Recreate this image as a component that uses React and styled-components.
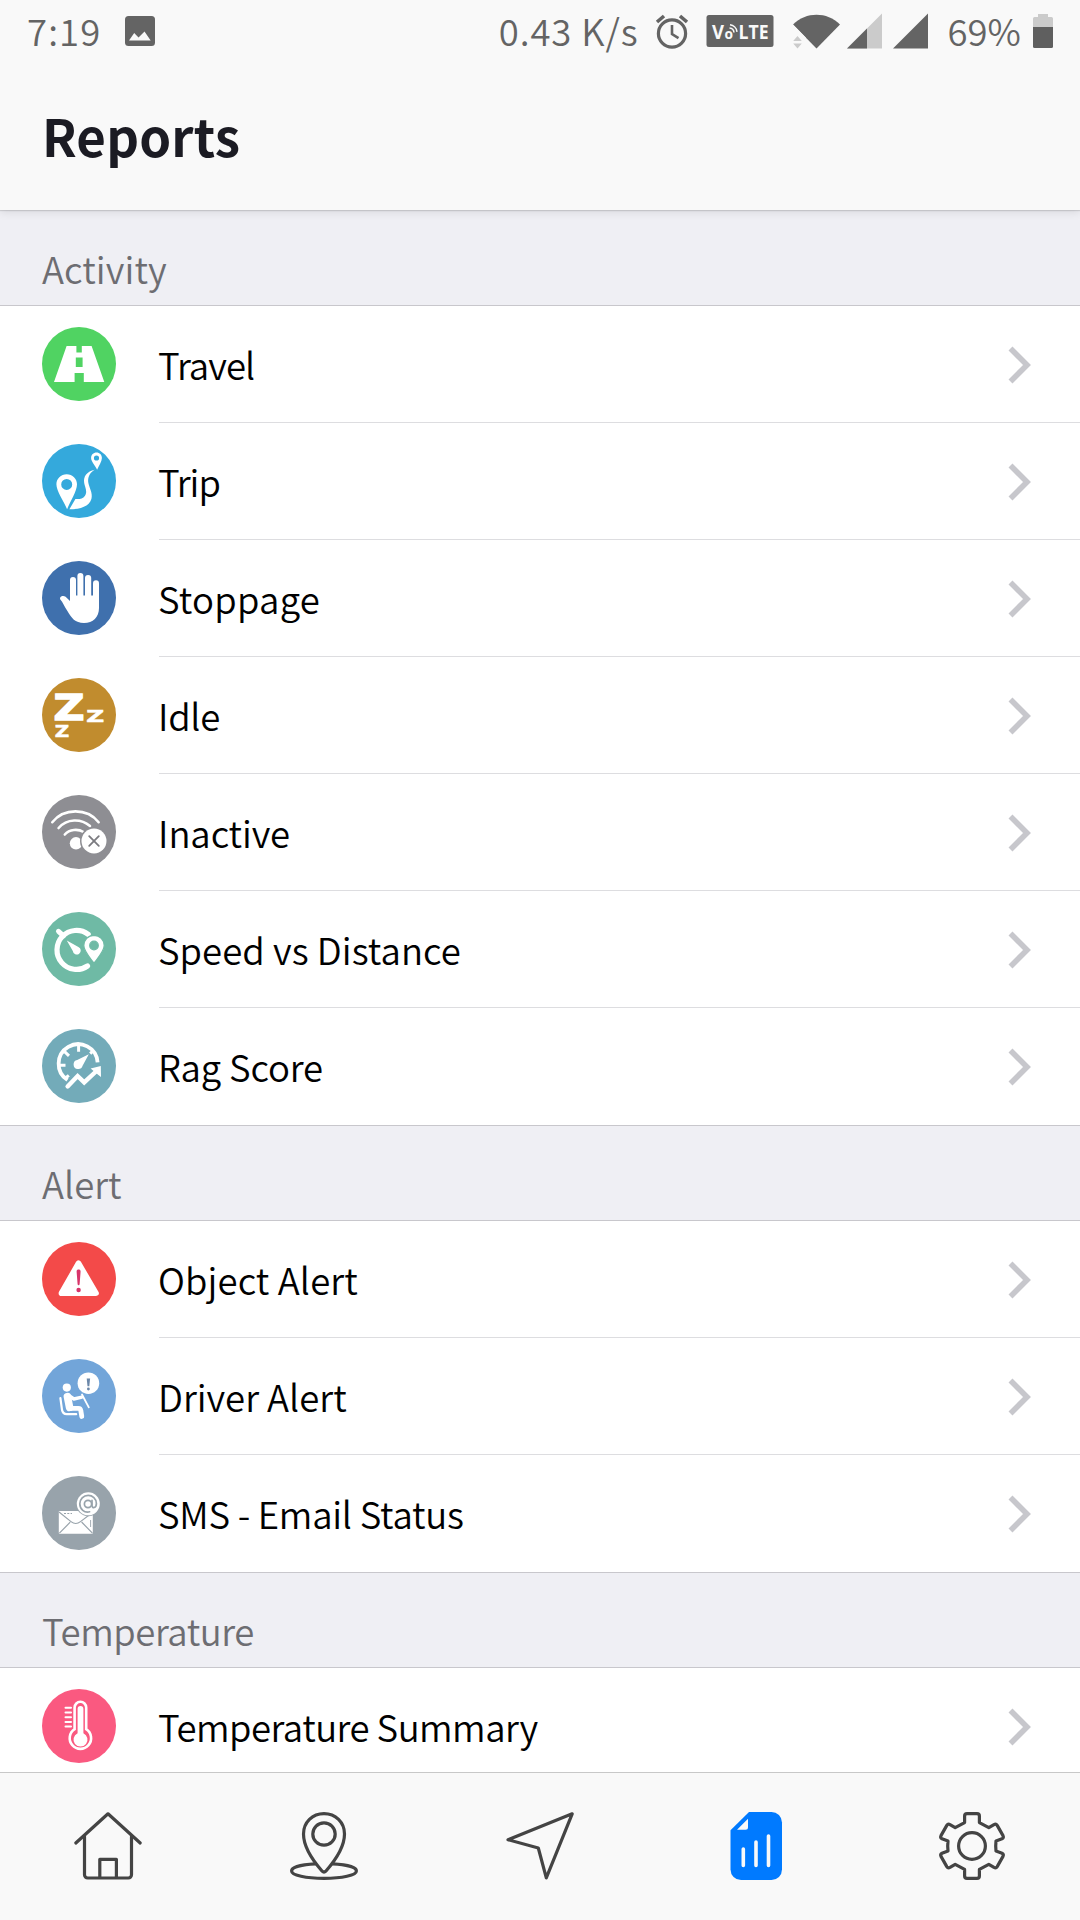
import React, { useState } from 'react';
import styled, { createGlobalStyle } from 'styled-components';

const GlobalStyle = createGlobalStyle`
  * {
    box-sizing: border-box;
  }

  body {
    margin: 0;
    overflow: hidden;
    background: #fff;
    font-family: 'Noto Sans CJK SC', 'Noto Sans', sans-serif;
    font-weight: 350;
  }
`;

/* Row icons, all drawn on a 74x74 grid */

const TravelIcon = () => (
  <path
    fill="#fff"
    fillRule="evenodd"
    d="M24.6 19h25L62.3 55H12L24.6 19Zm9.8 0v6.5h5.4V19h-5.4Zm-.6 11.5V40h6.8v-9.5h-6.8ZM32.6 46v9h9.2v-9h-9.2Z"
  />
);

const TripIcon = () => (
  <g fill="#fff">
    <path
      fillRule="evenodd"
      d="M24.7 30.3c-5.8 0-10.3 4.4-10.3 10 0 7 7.6 17.5 10.7 24.9 3-7.4 9.9-17.9 9.9-24.9 0-5.6-4.5-10-10.3-10Zm0 4.6a5.5 5.5 0 1 1 0 11 5.5 5.5 0 0 1 0-11Z"
    />
    <path
      fillRule="evenodd"
      d="M54.5 8.6c-3.1 0-5.4 2.4-5.4 5.4 0 3.7 4.3 7.7 6 11.8 1.7-4.1 4.8-8.1 4.8-11.8 0-3-2.3-5.4-5.4-5.4Zm0 2.8a2.6 2.6 0 1 1 0 5.2 2.6 2.6 0 0 1 0-5.2Z"
    />
    <path d="M52.8 25.8C45 27.5 41 32.5 42.2 39c.9 4.5 3.5 8.8.8 12.8-2.3 3.4-6 3.4-9.6 3.2l-6 10.2c10.4.2 19.8-2.7 22-10.2 1.7-6.2-2.5-11.5-3.2-17-.5-5.5 2-9.5 6.6-12.2Z" />
  </g>
);

const StoppageIcon = () => (
  <g fill="#fff">
    <path d="M28 40l-4.4-4.2c-2.6-2-6.6 0-5.3 2.6C21 41 22 45 25.4 50 29.5 57 33 62 42 62s15-6 15-15V34.5H28V40Z" />
    <rect x="28" y="16" width="6" height="26" rx="3" />
    <rect x="35.4" y="12" width="6" height="30" rx="3" />
    <rect x="43" y="14" width="6.2" height="28" rx="3" />
    <rect x="51" y="19.2" width="6" height="24" rx="3" />
  </g>
);

const IdleIcon = () => (
  <g fill="#fff" stroke="#fff" fontFamily="'DejaVu Sans', sans-serif" fontWeight="700">
    <text x="11.5" y="41.5" fontSize="36" strokeWidth="1.4" textLength="31" lengthAdjust="spacingAndGlyphs">Z</text>
    <text x="44.2" y="43.5" fontSize="15.5" strokeWidth=".5" textLength="18" lengthAdjust="spacingAndGlyphs">Z</text>
    <text x="12.8" y="59" fontSize="15" strokeWidth=".5" textLength="14.5" lengthAdjust="spacingAndGlyphs">Z</text>
  </g>
);

const InactiveIcon = () => (
  <>
    <g fill="none" stroke="#fff" strokeWidth="2.6" strokeLinecap="round">
      <path d="M10.3 27.2C22 12.8 45 12.8 56.6 27.2" />
      <path d="M16.6 33C25 23.4 39 23.4 48 31" />
      <path d="M22.8 39.5C27.5 34.2 36 33.6 41.5 37" />
    </g>
    <circle cx="34" cy="48.3" r="6.2" fill="#fff" />
    <circle cx="52" cy="46" r="14" fill="#8e8e93" />
    <circle cx="52" cy="46" r="12.5" fill="#fff" />
    <path d="M47.2 41.2l9.6 9.6M56.8 41.2l-9.6 9.6" stroke="#7b7b80" strokeWidth="1.8" strokeLinecap="round" />
  </>
);

const SpeedIcon = () => (
  <>
    <path d="M46.2 22.3A19.5 19.5 0 1 0 45.5 54" fill="none" stroke="#fff" strokeWidth="5.2" strokeLinecap="round" />
    <path d="M16.5 19.3l5 4.6" stroke="#fff" strokeWidth="5" strokeLinecap="round" />
    <path d="M24.8 28.6l11.6 6.3a4 4 0 1 1-5.6 4.2Z" fill="#fff" />
    <path
      fill="#fff"
      stroke="#6fbaa5"
      strokeWidth="1.2"
      fillRule="evenodd"
      d="M52 23.4c-5.8 0-10.2 4.6-10.2 10.2 0 5.4 5.2 11 10.2 17.6 5-6.6 10.2-12.2 10.2-17.6 0-5.6-4.4-10.2-10.2-10.2Zm0 5.8a4.3 4.3 0 1 1 0 8.6 4.3 4.3 0 0 1 0-8.6Z"
    />
  </>
);

const RagIcon = () => (
  <>
    <g fill="none" stroke="#fff" strokeWidth="3.8">
      <path d="M25.5 51A19.5 19.5 0 1 1 55.6 33.4" />
      <path d="M36.6 17v5.8M22.6 22.6l4.4 4.2M17.5 36.2h6M50.2 22.6l-2 2M23 49.5l3.8-3.2" strokeWidth="3" />
      <path d="M25.6 57.5L35.6 47l6.6 6.4L54.5 42" strokeWidth="4.4" strokeLinecap="round" strokeLinejoin="miter" />
    </g>
    <path d="M46.8 25.2l-6.2 11.6a4.6 4.6 0 1 1-5.4-5.8Z" fill="#fff" />
    <path d="M48.6 39.6l10.2-2.6.2 11-3.2-2.6Z" fill="#fff" />
  </>
);

const ObjectAlertIcon = () => (
  <>
    <path d="M36.5 21.2L54 51.2H19.4Z" fill="#fff" stroke="#fff" strokeWidth="5.6" strokeLinejoin="round" />
    <path d="M34.6 29.6c0-1.4.9-2 2-2s2 .6 2 2l-1 12.6c-.1 1.3-1.9 1.3-2 0Z" fill="#d8346a" />
    <circle cx="36.6" cy="48" r="2.2" fill="#d8346a" />
  </>
);

const DriverAlertIcon = () => (
  <>
    <circle cx="46.4" cy="24.2" r="10.8" fill="#fff" />
    <path d="M44.7 19.4h3.4l-.8 7.8h-1.8Z" fill="#6b87a8" />
    <circle cx="46.4" cy="30" r="1.4" fill="#6b87a8" />
    <circle cx="24.8" cy="28.6" r="4.1" fill="#fff" />
    <g fill="none" stroke="#fff" strokeLinecap="round" strokeLinejoin="round">
      <path d="M18.4 39.2l1.6 11.6c.5 3 2 4.4 4.8 4.4h9.4" strokeWidth="2.2" />
      <path d="M25.4 37.6l2.2 10.8" strokeWidth="7.6" />
      <path d="M28.2 49.3h8.2c1.6 0 2.2.8 2.4 2.2l1 6" strokeWidth="4.8" />
      <path d="M27.5 37l4.4 3 8-1.8" strokeWidth="3.4" />
      <path d="M40 35.5l6.8 12.8" strokeWidth="1.8" />
    </g>
  </>
);

const SmsEmailIcon = () => (
  <>
    <rect x="16.8" y="35" width="34" height="22.8" rx=".8" fill="#fff" />
    <g fill="none" stroke="#98a3ab" strokeWidth="1.2">
      <path d="M17 36l12 9.6c3 2.4 6.5 2.4 9.5 0l8-6" />
      <path d="M17.4 57.2l10.8-11M50.4 57.2L39.6 46" />
      <path d="M22 37.5h8" strokeDasharray="2 1.3" />
      <path d="M48.6 44v7" strokeWidth=".9" />
    </g>
    <circle cx="46.3" cy="27.8" r="12.4" fill="#98a3ab" />
    <circle cx="46.3" cy="27.8" r="11.5" fill="#fff" />
    <g fill="none" stroke="#98a3ab" strokeWidth="1.7" strokeLinecap="round">
      <circle cx="46" cy="28" r="3.6" />
      <path d="M50 24.4v5.2c0 3.2 4.4 2.6 4.4-2 0-5-4-8.2-8.2-8.2-4.8 0-8.4 3.8-8.4 8.4 0 5.4 4.6 9.4 9.8 8" />
    </g>
  </>
);

const TemperatureIcon = () => (
  <>
    <path
      d="M32.6 40.2V18.6a5.8 5.8 0 0 1 11.6 0v21.6a10.7 10.7 0 1 1-11.6 0Z"
      fill="none"
      stroke="#fff"
      strokeWidth="2.6"
    />
    <path d="M35.6 20a2.9 2.9 0 0 1 5.8 0v24.2a7 7 0 1 1-5.8 0Z" fill="#fff" />
    <path
      d="M23.5 18.8H29M23.5 23.5H29M23.5 28.2H29M23.5 32.9H29M23.5 37.6H29"
      stroke="#fff"
      strokeWidth="2"
      strokeLinecap="round"
    />
  </>
);

/* Tab icons, drawn on a 68x68 grid */

const HomeTab = () => (
  <>
    <path d="M1.8 31L34 1.8 66.2 31" />
    <path d="M10.5 24.5V62.8a3.2 3.2 0 0 0 3.2 3.2h40.6a3.2 3.2 0 0 0 3.2-3.2V24.5" />
    <path d="M25.8 65.5V47.3h16.6v18.2" />
  </>
);

const PlaceTab = () => (
  <>
    <path d="M34 1.6C22.5 1.6 13.5 10.5 13.5 22c0 12.5 9.3 26.5 18.7 37.2 1.2 1.3 2.4 1.3 3.6 0C45.2 48.5 54.5 34.5 54.5 22 54.5 10.5 45.5 1.6 34 1.6Z" />
    <circle cx="34" cy="22" r="11.2" />
    <path d="M25.5 51.9C12 52.5 1.6 55 1.6 58.9c0 4.3 14.4 7.4 32.4 7.4s32.4-3.1 32.4-7.4c0-3.9-10.4-6.4-23.9-7" />
  </>
);

const NavigateTab = () => <path d="M2 27.7L66.2 1.8 40.3 65.8 32.3 36Z" />;

const ReportsTab = () => (
  <>
    <path
      d="M27 0h22.5A10.5 10.5 0 0 1 60 10.5v47A10.5 10.5 0 0 1 49.5 68H19A10.5 10.5 0 0 1 8.5 57.5V18.3Z"
      fill="#007aff"
      stroke="none"
    />
    <path d="M26 6.8v8.4a2.5 2.5 0 0 1-2.5 2.5H15Z" fill="#f9f9f9" stroke="none" />
    <path d="M21.3 37v16.5M34 30v23.5M46.5 24v29.5" stroke="#f9f9f9" strokeWidth="3.6" />
  </>
);

const SettingsTab = () => (
  <>
    <path d="M26.6 10.6V4q0-2.4 2.4-2.4h10q2.4 0 2.4 2.4v6.6l9.4 5.1 5.2-3.1q2-1.1 3.2.8L65 23.6q1 2.2-1 3.2L58 29q-.6 5 0 10l6 2.2q2 1 1 3.2l-5.8 10.2q-1.2 1.9-3.2.8l-5.2-3.1-9.4 5.1V64q0 2.4-2.4 2.4H29q-2.4 0-2.4-2.4v-6.6l-9.4-5.1-5.2 3.1q-2 1.1-3.2-.8L3 44.4q-1-2.2 1-3.2l6-2.2q-.6-5 0-10l-6-2.2q-2-1-1-3.2l5.8-10.2q1.2-1.9 3.2-.8l5.2 3.1Z" />
    <circle cx="34" cy="34" r="13.4" />
  </>
);

const sections = [
  {
    title: 'Activity',
    spacing: 0.1,
    items: [
      { label: 'Travel', spacing: -0.9, color: '#50d362', Icon: TravelIcon },
      { label: 'Trip', spacing: -1, color: '#34a9dc', Icon: TripIcon },
      { label: 'Stoppage', spacing: 0.25, color: '#3f70ad', Icon: StoppageIcon },
      { label: 'Idle', spacing: -0.3, color: '#c18c2e', Icon: IdleIcon },
      { label: 'Inactive', spacing: -0.1, color: '#8e8e93', Icon: InactiveIcon },
      { label: 'Speed vs Distance', spacing: 0.05, color: '#6fbaa5', Icon: SpeedIcon },
      { label: 'Rag Score', spacing: -0.15, color: '#73abb9', Icon: RagIcon }
    ]
  },
  {
    title: 'Alert',
    spacing: 0,
    items: [
      { label: 'Object Alert', spacing: 0.12, color: '#f34a49', Icon: ObjectAlertIcon },
      { label: 'Driver Alert', spacing: 0, color: '#72a5d9', Icon: DriverAlertIcon },
      { label: 'SMS - Email Status', spacing: -0.25, color: '#98a3ab', Icon: SmsEmailIcon }
    ]
  },
  {
    title: 'Temperature',
    spacing: -0.45,
    items: [{ label: 'Temperature Summary', spacing: -0.53, color: '#fa5980', Icon: TemperatureIcon }]
  }
];

const tabs = [
  { id: 'home', Icon: HomeTab },
  { id: 'places', Icon: PlaceTab },
  { id: 'navigate', Icon: NavigateTab },
  { id: 'reports', Icon: ReportsTab },
  { id: 'settings', Icon: SettingsTab }
];

const StatusIcons = () => (
  <>
    <StatusIcon $gap={16} width="34" height="36" viewBox="0 0 34 36">
      <g fill="none" stroke="#646464" strokeWidth="3.2">
        <circle cx="17" cy="20.5" r="13.6" />
        <path d="M17 12v9l6.5 4.2" strokeWidth="2.6" />
        <path d="M2 9l7-6M32 9l-7-6" strokeWidth="3.6" />
      </g>
    </StatusIcon>
    <StatusIcon $gap={17} width="68" height="34" viewBox="0 0 68 34">
      <rect x=".5" y="1" width="67" height="32" rx="2.5" fill="#646464" />
      <g fill="#f9f9f9" fontFamily="'Open Sans', sans-serif" fontWeight="700">
        <text x="6" y="24.5" fontSize="19.5" textLength="12" lengthAdjust="spacingAndGlyphs">V</text>
        <text x="18.5" y="24.5" fontSize="14.5" textLength="8.5" lengthAdjust="spacingAndGlyphs">o</text>
        <text x="32.5" y="24.5" fontSize="19.5" textLength="30" lengthAdjust="spacingAndGlyphs">LTE</text>
      </g>
      <path d="M23.500 14a5 5 0 0 1 4.500 4.500M24 10.800a8 8 0 0 1 7 7" fill="none" stroke="#f9f9f9" strokeWidth="1.5" />
    </StatusIcon>
    <StatusIcon $gap={19} width="47" height="36" viewBox="0 0 47 36">
      <path d="M0 11.5C13-1.5 34-1.5 47 11.5L23.5 35.5Z" fill="#646464" />
      <path d="M0 11.5V36h12.5V24.2Z" fill="#f9f9f9" />
      <path d="M4.5 23l4.3 5H.2ZM4.5 35.5l4.3-5H.2Z" fill="#cbcbcb" />
    </StatusIcon>
    <StatusIcon $gap={7} width="35" height="36" viewBox="0 0 35 36">
      <path d="M35 .5V35.5H0Z" fill="#cbcbcb" />
      <path d="M20 15.5v20H0Z" fill="#646464" />
    </StatusIcon>
    <StatusIcon $gap={11} width="35" height="36" viewBox="0 0 35 36">
      <path d="M35 .5V35.5H0Z" fill="#646464" />
    </StatusIcon>
  </>
);

const App = () => {
  const [activeTab, setActiveTab] = useState('reports');

  return (
    <Screen>
      <GlobalStyle />
      <Header>
        <StatusBar>
          <StatusText $spacing={1.1}>7:19</StatusText>
          <StatusIcon $gap={24} width="30" height="30" viewBox="0 0 30 30">
            <rect width="30" height="30" rx="3.5" fill="#646464" />
            <path d="M4 24.5l5.2-7.5 4.3 4.6 6-6.2 6.2 9.1Z" fill="#f9f9f9" />
          </StatusIcon>
          <StatusRight>
            <StatusText $spacing={0.9}>0.43 K/s</StatusText>
            <StatusIcons />
            <StatusText $spacing={0} $gap={20}>69%</StatusText>
            <StatusIcon $gap={12} width="20" height="34" viewBox="0 0 20 34">
              <path d="M1.5 3H5V0h10v3h3.5Q20 3 20 4.5V13H0V4.5Q0 3 1.5 3Z" fill="#cbcbcb" />
              <path d="M0 13h20v19.5q0 1.5-1.5 1.5h-17Q0 34 0 32.5Z" fill="#5f5f5f" />
            </StatusIcon>
          </StatusRight>
        </StatusBar>
        <Title>Reports</Title>
      </Header>

      <Content>
        {sections.map(section => (
          <section key={section.title}>
            <SectionTitle $spacing={section.spacing}>{section.title}</SectionTitle>
            <List>
              {section.items.map(({ label, spacing, color, Icon }) => (
                <Row key={label}>
                  <RowIcon viewBox="0 0 74 74">
                    <circle cx="37" cy="37" r="37" fill={color} />
                    <Icon />
                  </RowIcon>
                  <RowBody>
                    <RowLabel $spacing={spacing}>{label}</RowLabel>
                    <Chevron viewBox="0 0 24 38">
                      <path d="M2.5 2.5L19 19 2.5 35.5" />
                    </Chevron>
                  </RowBody>
                </Row>
              ))}
            </List>
          </section>
        ))}
      </Content>

      <TabBar>
        {tabs.map(({ id, Icon }) => (
          <Tab key={id} aria-label={id} aria-current={activeTab === id} onClick={() => setActiveTab(id)}>
            <TabIcon viewBox="0 0 68 68">
              <Icon />
            </TabIcon>
          </Tab>
        ))}
      </TabBar>
    </Screen>
  );
};

const Screen = styled.div`
  display: flex;
  flex-direction: column;
  width: 1080px;
  height: 1920px;
  overflow: hidden;
`;

const Header = styled.header`
  position: relative;
  z-index: 1;
  flex: none;
  height: 210px;
  background: #f9f9f9;
  box-shadow: 0 1px 1px rgba(0, 0, 0, 0.12), 0 2px 9px rgba(0, 0, 0, 0.1);
`;

const StatusBar = styled.div`
  display: flex;
  align-items: center;
  height: 62px;
  padding: 0 27px;
`;

const StatusRight = styled.div`
  display: flex;
  align-items: center;
  margin-left: auto;
`;

const StatusText = styled.span`
  margin-left: ${props => props.$gap || 0}px;
  color: #646464;
  font-size: 36.5px;
  line-height: 60px;
  letter-spacing: ${props => props.$spacing}px;
  white-space: nowrap;
`;

const StatusIcon = styled.svg`
  flex: none;
  margin-left: ${props => props.$gap}px;
`;

const Title = styled.h1`
  margin: 0;
  padding: 37px 42px 0;
  color: #1b1b23;
  font-size: 51px;
  font-weight: 700;
  line-height: 72px;
  letter-spacing: 0.2px;
`;

const Content = styled.main`
  flex: 1;
  min-height: 0;
  overflow: hidden;
  background: #efeff4;

  section:first-child > h2 {
    height: 95px;
    padding-top: 34px;
  }
`;

const SectionTitle = styled.h2`
  height: 94px;
  margin: 0;
  padding: 33px 42px 0;
  color: #6d6d72;
  font-size: 36.5px;
  font-weight: 350;
  line-height: 50px;
  letter-spacing: ${props => props.$spacing}px;
`;

const List = styled.ul`
  margin: 0;
  padding: 0;
  list-style: none;
  background: #fff;
  border-top: 1px solid #c8c7cc;
  border-bottom: 1px solid #c8c7cc;
`;

const Row = styled.li`
  display: flex;
  align-items: center;
  gap: 43px;
  height: 117px;
  padding-left: 42px;
`;

const RowIcon = styled.svg`
  flex: none;
  width: 74px;
  height: 74px;
  margin-bottom: 2px;
`;

const RowBody = styled.div`
  display: flex;
  flex: 1;
  align-items: center;
  justify-content: space-between;
  height: 117px;
  padding: 2px 48px 0 0;
  border-bottom: 1px solid #dddde0;

  ${Row}:last-child & {
    border-bottom-color: transparent;
  }
`;

const RowLabel = styled.span`
  margin-left: -1px;
  color: #000;
  font-size: 36.5px;
  line-height: 60px;
  letter-spacing: ${props => props.$spacing}px;
  white-space: nowrap;
`;

const Chevron = styled.svg`
  width: 24px;
  height: 38px;
  fill: none;
  stroke: #c7c7cc;
  stroke-width: 5.6;
`;

const TabBar = styled.nav`
  display: flex;
  flex: none;
  height: 148px;
  background: #f9f9f9;
  border-top: 1px solid #c8c8c8;
`;

const Tab = styled.button`
  display: flex;
  flex: 1;
  align-items: center;
  justify-content: center;
  padding: 0 0 2px;
  border: none;
  background: none;
`;

const TabIcon = styled.svg`
  width: 68px;
  height: 68px;
  overflow: visible;
  fill: none;
  stroke: #444;
  stroke-width: 3.2;
  stroke-linecap: round;
  stroke-linejoin: round;
`;

export default App;
